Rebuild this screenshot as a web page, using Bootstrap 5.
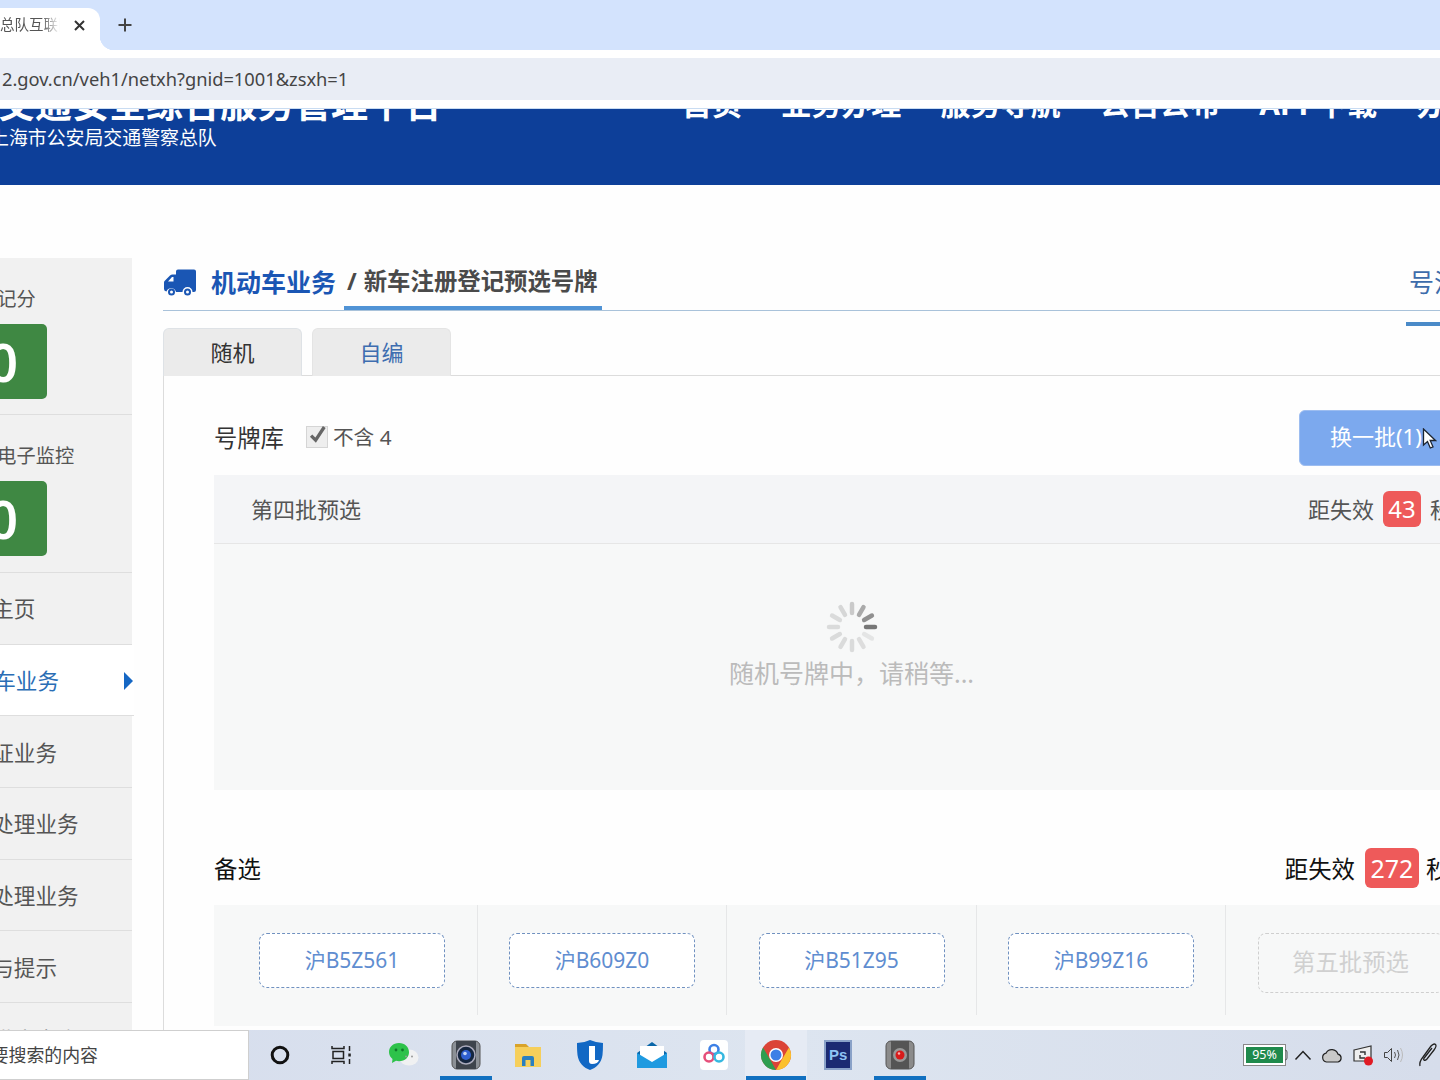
<!DOCTYPE html>
<html lang="zh-CN">
<head>
  <meta charset="UTF-8">
  <title>新车注册登记预选号牌</title>
  <link href="https://cdn.jsdelivr.net/npm/bootstrap@5.3.0/dist/css/bootstrap.min.css" rel="stylesheet">
  <style>
    html, body { height: 100%; }
    body {
      width: 1440px;
      height: 1080px;
      overflow: hidden;
      background: #fefefe;
      font-family: "Noto Sans", "Noto Sans CJK SC", sans-serif;
      color: #333;
    }

    /* browser chrome */
    .tab-strip { height: 50px; background: #d3e3fd; padding-top: 8px; flex: none; }
    .page-tab {
      position: relative;
      width: 100px;
      background: #fff;
      border-radius: 0 12px 0 0;
      font-size: 14.5px;
      color: #555;
      padding-bottom: 8px;
    }
    .page-tab::after {
      content: "";
      position: absolute;
      left: 100px;
      bottom: 0;
      width: 14px;
      height: 14px;
      background: radial-gradient(circle at 100% 0, #d3e3fd 14px, #fff 14.5px);
    }
    .tab-title {
      width: 60px;
      overflow: hidden;
      white-space: nowrap;
      -webkit-mask-image: linear-gradient(90deg, #000 70%, transparent);
      mask-image: linear-gradient(90deg, #000 70%, transparent);
    }
    .tab-x { margin-left: 13px; }
    .tab-add { margin: 0 0 8px 17px; }
    .url-wrap { height: 58px; padding: 8px 0; background: #fff; flex: none; }
    .url-bar {
      height: 42px;
      background: #e9edf5;
      padding-left: 2px;
      font-size: 18.3px;
      color: #444;
      white-space: nowrap;
    }

    /* site header, scrolled so only its lower part is seen */
    .brand-bar {
      height: 77px;
      background: #0d3f99;
      color: #fff;
      overflow: hidden;
      flex: none;
      border-top: 1px solid #c9dcf2;
    }
    .brand-left { margin-left: -2px; width: 684px; flex: none; }
    .brand-name {
      font-size: 37px;
      font-weight: 700;
      line-height: 44px;
      margin-top: -27px;
      white-space: nowrap;
    }
    .brand-sub {
      font-size: 18.9px;
      line-height: 24px;
      margin: 0 0 0 -8px;
      white-space: nowrap;
    }
    .brand-links {
      font-size: 30px;
      font-weight: 700;
      line-height: 40px;
      margin-top: -25px;
      gap: 39.3px;
      white-space: nowrap;
    }

    .mid-area { height: 845px; flex: none; overflow: hidden; }

    /* left menu */
    .side-menu {
      width: 192px;
      margin: 73px 0 0 -60px;
      flex: none;
      background: #f1f1f1;
      font-size: 21.6px;
    }
    .side-menu .list-group-item {
      background: transparent;
      border-color: #dedede;
      color: #555;
      padding: 2px 0 0 9px;
      height: 71.7px;
      display: flex;
      align-items: center;
      white-space: nowrap;
    }
    .side-menu .list-group-item.now-item {
      background: #fff;
      color: #2a6db5;
      position: relative;
      padding-left: 11px;
      margin-right: -2px;
    }
    .now-arrow {
      position: absolute;
      right: 1px;
      top: 27px;
      width: 0;
      height: 0;
      border-left: 9px solid #1567c4;
      border-top: 9px solid transparent;
      border-bottom: 9px solid transparent;
    }
    .side-menu .score-item {
      height: 157px;
      display: block;
      padding: 29px 0 0 19px;
      font-size: 19.2px;
      line-height: 24px;
    }
    .side-menu .score-item + .score-item { height: 158px; }
    .score-num {
      width: 94px;
      height: 75px;
      margin: 13px 0 0 -6px;
      padding-left: 6px;
      background: #3f8843;
      border-radius: 5px;
      color: #fff;
      font-size: 52px;
      font-weight: 600;
    }

    /* main column */
    .main-col { width: 1277px; margin: 78px 0 0 31px; flex: none; overflow: hidden; position: relative; }
    .crumb-row {
      height: 48px;
      border-bottom: 1px solid #a9c2da;
      white-space: nowrap;
    }
    .crumb-truck { margin: 0 15px 7px 1px; }
    .crumb-root { font-size: 25px; font-weight: 700; color: #1a56b4; margin: 0 8px 8px 0; }
    .crumb-now {
      font-size: 23.4px;
      font-weight: 700;
      color: #4a4a4a;
      padding: 0 4px 0 3px;
      height: 47px;
      line-height: 36px;
      border-bottom: 4px solid #5093d5;
    }
    .crumb-now span { margin-right: 7px; }
    .crumb-right { position: absolute; left: 1246px; top: 1px; font-size: 25px; color: #3d6cab; line-height: 36px; white-space: nowrap; }
    .crumb-bar { position: absolute; left: 1243px; top: 59px; width: 60px; height: 4px; background: #4a8ac8; }

    .plate-tabs { margin-top: 17px; border-bottom: 1px solid #dcdcdc; gap: 10px; height: 48px; }
    .plate-tabs .nav-link {
      width: 139px;
      height: 48px;
      background: #ebebeb;
      border: 1px solid #e4e4e4;
      border-bottom: 0;
      border-radius: 6px 6px 0 0;
      font-size: 22px;
      line-height: 30px;
      padding: 8px 0 0;
      text-align: center;
      margin: 0;
      color: #3e6db0;
    }
    .plate-tabs .nav-link.active { color: #333; background: #ebebeb; }

    .plate-panel { border-left: 1px solid #dcdcdc; padding-left: 50px; width: 1340px; height: 700px; }
    .lib-row { height: 99px; padding-top: 24px; }
    .lib-title { font-size: 23.3px; line-height: 56px; color: #333; margin-right: 22px; }
    .fake-check {
      width: 22px;
      height: 22px;
      background: #eee;
      border: 1px solid #d5d5d5;
      margin: 0 5px 1px 0;
    }
    .no-four { font-size: 20.7px; color: #555; margin-top: 1px; }
    .swap-btn {
      position: absolute;
      left: 1136px;
      top: 147px;
      width: 200px;
      height: 56px;
      background: #7ca9ee;
      border: 1px solid #9dbdf0;
      border-radius: 6px;
      color: #fff;
      font-size: 22px;
      text-align: left;
      padding: 0 0 3px 30px;
    }
    .swap-btn:disabled { background: #7ca9ee; color: #fff; opacity: 1; border-color: #9dbdf0; }
    .mouse-arrow { position: absolute; left: 1259px; top: 165px; }

    .batch-head {
      height: 69px;
      background: #f4f5f7;
      border-bottom: 1px solid #e6e6e6;
      padding-left: 37px;
      font-size: 22px;
      color: #555;
    }
    .batch-time { margin-left: 947px; gap: 9px; white-space: nowrap; }
    .time-tag {
      background: #ee5a5a;
      color: #fff;
      border-radius: 6px;
      font-weight: 400;
      padding: 0;
      display: flex;
      align-items: center;
      justify-content: center;
    }
    .tag-sm { width: 38px; height: 36px; font-size: 24px; }
    .tag-lg { width: 54px; height: 40px; font-size: 25px; }
    .batch-body {
      height: 246px;
      background: #f7f8f8;
      padding-top: 56px;
      color: #bbb;
      font-size: 25px;
      width: 1275px;
    }
    .load-text { line-height: 36px; margin-top: 1px; width: 1275px; text-align: center; }

    .spare-row { height: 115px; padding-top: 41px; font-size: 23.4px; color: #111; white-space: nowrap; }
    .spare-label { margin-top: 3px; }
    .spare-time { margin-left: 1024px; gap: 10px; }
    .spare-time .secs { margin-left: -3px; }
    .spare-band { height: 121px; background: #f7f8f8; width: 1290px; }
    .spare-cell {
      height: 110px;
      width: 249.5px;
      padding: 28px 0 0 31.5px;
      border-right: 1px solid #e6e7e8;
      flex: none;
    }
    .spare-cell:first-child { width: 263.5px; padding-left: 45px; }
    .spare-cell:last-child { border-right: 0; }
    .plate-btn {
      width: 186px;
      height: 55px;
      background: #fff;
      border: 1px dashed #7091c0;
      border-radius: 8px;
      color: #5f8dd0;
      font-size: 21px;
    }
    .plate-btn.off-btn {
      height: 60px;
      background: transparent;
      border-color: #cfcfcf;
      color: #d0d0d0;
      font-size: 23.4px;
    }

    /* windows taskbar */
    .task-bar {
      height: 50px;
      flex: none;
      background: linear-gradient(90deg, #d5dcec, #dde5f0 55%, #d6ddeb);
    }
    .search-box {
      width: 249px;
      height: 50px;
      background: #fff;
      border: 1px solid #cfcfcf;
      border-left: 0;
      font-size: 17.9px;
      color: #444;
      white-space: nowrap;
      justify-content: flex-end;
      padding-right: 150px;
      flex: none;
    }
    .task-icon {
      position: relative;
      width: 62px;
      height: 50px;
      flex: none;
    }
    .task-icon.on-app::after {
      content: "";
      position: absolute;
      left: 5px;
      right: 5px;
      bottom: 0;
      height: 4px;
      background: #1170c0;
    }
    .task-icon.front-app { background: #e6ebf4; }
    .task-icon.front-app::after { left: 1px; right: 1px; }
    .tray-wrap { margin-left: 313px; gap: 9px; }
    .tray-battery { margin-right: -3px; }
    .tray-pen { margin-left: 4px; }
    .battery-box {
      width: 41px;
      height: 20px;
      background: #1f8a4c;
      border: 2px solid #fff;
      outline: 1px solid #888;
      color: #fff;
      font-size: 12.5px;
      line-height: 16px;
      text-align: center;
    }
    .ps-glyph { font-family: "Liberation Sans", sans-serif; font-weight: 700; font-size: 15px; fill: #8fc4f5; }
  </style>
</head>
<body class="d-flex flex-column">

  <div class="tab-strip d-flex">
    <div class="page-tab d-flex align-items-center">
      <span class="tab-title">总队互联网交通安全</span>
      <svg class="tab-x" width="13" height="13" viewBox="0 0 13 13"><path d="M2 2l9 9M11 2l-9 9" stroke="#333" stroke-width="2"/></svg>
    </div>
    <svg class="tab-add align-self-center" width="16" height="16" viewBox="0 0 16 16"><path d="M8 1.500v13M1.500 8h13" stroke="#444" stroke-width="2"/></svg>
  </div>

  <div class="url-wrap">
    <div class="url-bar d-flex align-items-center">2.gov.cn/veh1/netxh?gnid=1001&amp;zsxh=1</div>
  </div>

  <header class="brand-bar d-flex">
    <div class="brand-left">
      <div class="brand-name">交通安全综合服务管理平台</div>
      <p class="brand-sub">上海市公安局交通警察总队</p>
    </div>
    <nav class="brand-links d-flex">
      <span>首页</span><span>业务办理</span><span>服务导航</span><span>公告公布</span><span>APP下载</span><span>办事指南</span>
    </nav>
  </header>

  <div class="mid-area d-flex">
    <aside class="side-menu">
      <div class="list-group list-group-flush">
        <div class="list-group-item score-item">累积记分
          <div class="score-num d-flex align-items-center justify-content-center">0</div>
        </div>
        <div class="list-group-item score-item">处理电子监控
          <div class="score-num d-flex align-items-center justify-content-center">0</div>
        </div>
        <a class="list-group-item" href="#">我的主页</a>
        <a class="list-group-item now-item" href="#">机动车业务<i class="now-arrow"></i></a>
        <a class="list-group-item" href="#">驾驶证业务</a>
        <a class="list-group-item" href="#">违法处理业务</a>
        <a class="list-group-item" href="#">事故处理业务</a>
        <a class="list-group-item" href="#">告知与提示</a>
        <a class="list-group-item" href="#">网办进度查询</a>
      </div>
    </aside>

    <main class="main-col">
      <div class="crumb-row d-flex align-items-center">
        <svg class="crumb-truck" width="32" height="28" viewBox="0 0 32 28">
          <path fill="#1a56b4" d="M12 2.500Q12 .5 14 .5h16q2 0 2 2V21q0 2-2 2h-1.500a5 5 0 0 0-10 0H12a5 5 0 0 0-9.500-.5Q0 22 0 20v-6.500q0-1 .8-1.800L6 6.500Q7 5.500 8.500 5.500H12zM9.500 8H8L4 12.500h5.500z"/>
          <circle cx="7.500" cy="23" r="3.500" fill="#1a56b4"/><circle cx="7.500" cy="23" r="1.500" fill="#fff"/>
          <circle cx="23.500" cy="23" r="3.500" fill="#1a56b4"/><circle cx="23.500" cy="23" r="1.500" fill="#fff"/>
        </svg>
        <span class="crumb-root">机动车业务</span>
        <span class="crumb-now"><span>/</span>新车注册登记预选号牌</span>
      </div>
      <span class="crumb-right">号注</span>
      <i class="crumb-bar"></i>

      <ul class="nav nav-tabs plate-tabs">
        <li class="nav-item"><a class="nav-link active" href="#">随机</a></li>
        <li class="nav-item"><a class="nav-link" href="#">自编</a></li>
      </ul>

      <div class="plate-panel">
        <div class="lib-row d-flex align-items-center">
          <span class="lib-title">号牌库</span>
          <span class="fake-check d-flex align-items-center justify-content-center">
            <svg width="22" height="22" viewBox="0 0 22 22"><path d="M4.500 9.500l5 5L19 0" fill="none" stroke="#666" stroke-width="3.600"/></svg>
          </span>
          <span class="no-four">不含 4</span>
        </div>

        <div class="batch-head d-flex align-items-center">
          <span>第四批预选</span>
          <div class="batch-time d-flex align-items-center">
            <span>距失效</span><span class="badge time-tag tag-sm">43</span><span>秒</span>
          </div>
        </div>
        <div class="batch-body">
          <div class="text-center">
            <svg width="54" height="54" viewBox="-27 -27 54 54">
              <g stroke="#777" stroke-width="4.500" stroke-linecap="round">
                <line x1="14" x2="23" opacity="1"/>
                <line x1="14" x2="23" opacity=".14" transform="rotate(30)"/>
                <line x1="14" x2="23" opacity=".2" transform="rotate(60)"/>
                <line x1="14" x2="23" opacity=".22" transform="rotate(90)"/>
                <line x1="14" x2="23" opacity=".22" transform="rotate(120)"/>
                <line x1="14" x2="23" opacity=".22" transform="rotate(150)"/>
                <line x1="14" x2="23" opacity=".22" transform="rotate(180)"/>
                <line x1="14" x2="23" opacity=".22" transform="rotate(210)"/>
                <line x1="14" x2="23" opacity=".25" transform="rotate(240)"/>
                <line x1="14" x2="23" opacity=".35" transform="rotate(270)"/>
                <line x1="14" x2="23" opacity=".6" transform="rotate(300)"/>
                <line x1="14" x2="23" opacity=".8" transform="rotate(330)"/>
              </g>
            </svg>
          </div>
          <div class="load-text">随机号牌中，请稍等...</div>
        </div>

        <div class="spare-row d-flex align-items-center">
          <span class="spare-label">备选</span>
          <div class="spare-time d-flex align-items-center">
            <span class="spare-label">距失效</span><span class="badge time-tag tag-lg">272</span><span class="secs spare-label">秒</span>
          </div>
        </div>
        <div class="spare-band d-flex">
          <div class="spare-cell"><div class="plate-btn d-flex align-items-center justify-content-center">沪B5Z561</div></div>
          <div class="spare-cell"><div class="plate-btn d-flex align-items-center justify-content-center">沪B609Z0</div></div>
          <div class="spare-cell"><div class="plate-btn d-flex align-items-center justify-content-center">沪B51Z95</div></div>
          <div class="spare-cell"><div class="plate-btn d-flex align-items-center justify-content-center">沪B99Z16</div></div>
          <div class="spare-cell"><div class="plate-btn off-btn d-flex align-items-center justify-content-center">第五批预选</div></div>
        </div>
      </div>

      <button class="btn swap-btn" disabled>换一批(1)</button>
      <svg class="mouse-arrow" width="15" height="22" viewBox="0 0 15 22"><path d="M1.500 1v16l4-3.500 2.800 6.500 2.700-1.200-2.800-6.300H13.500z" fill="#fff" stroke="#1c2430" stroke-width="1.300"/></svg>
    </main>
  </div>

  <footer class="task-bar d-flex align-items-center">
    <div class="search-box d-flex align-items-center">要搜索的内容</div>
    <div class="task-icon d-flex align-items-center justify-content-center">
      <svg width="22" height="22" viewBox="0 0 22 22"><circle cx="11" cy="11" r="7.800" fill="none" stroke="#111" stroke-width="3"/></svg>
    </div>
    <div class="task-icon d-flex align-items-center justify-content-center">
      <svg width="24" height="24" viewBox="0 0 24 24" fill="none" stroke="#222" stroke-width="1.500"><path d="M2 3v2.500h12V3M3 8.500h10.500v7H3zM2 21v-2.500h12V21M19.500 3v5M19.500 16v5"/><path d="M18.300 10.500h2.500v3h-2.500z" fill="#222" stroke="none"/></svg>
    </div>
    <div class="task-icon d-flex align-items-center justify-content-center">
      <svg width="32" height="26" viewBox="0 0 32 26"><ellipse cx="21" cy="15.500" rx="9.500" ry="8" fill="#f0f1f2"/><path d="M11 1C5 1 1 5 1 10c0 3 1.400 5.200 3.500 7L4 21l4-2.200c1 .3 2 .4 3 .4 6 0 10-4 10-9S17 1 11 1z" fill="#2dc24a"/><circle cx="8" cy="8" r="1.400" fill="#0e7a2a"/><circle cx="14.500" cy="8" r="1.400" fill="#0e7a2a"/><circle cx="18" cy="14.500" r="1" fill="#999"/><circle cx="24" cy="14.500" r="1" fill="#999"/></svg>
    </div>
    <div class="task-icon on-app d-flex align-items-center justify-content-center">
      <svg width="30" height="30" viewBox="0 0 30 30"><rect x="1" y="1" width="28" height="28" rx="5" fill="#8b9096" stroke="#555"/><rect x="5" y="1" width="20" height="28" fill="#3e444c"/><circle cx="15" cy="15" r="9" fill="#15263f" stroke="#aab" stroke-width="1.500"/><circle cx="15" cy="15" r="5" fill="#2f5fd0"/><circle cx="14" cy="13.500" r="1.800" fill="#c6d8f5"/></svg>
    </div>
    <div class="task-icon d-flex align-items-center justify-content-center">
      <svg width="28" height="26" viewBox="0 0 28 26"><path d="M1 2h11l3 3H1z" fill="#d9a32a"/><path d="M1 5h26v20H1z" fill="#f6cf5b"/><path d="M8 24v-8q0-2 2-2h8q2 0 2 2v8h-3.500v-6h-5v6z" fill="#2a7fc0"/></svg>
    </div>
    <div class="task-icon d-flex align-items-center justify-content-center">
      <svg width="28" height="32" viewBox="0 0 28 32"><path d="M14 1q7 3 13 3 0 7-.5 12C25.500 24 20 29 14 31 8 29 2.500 24 1.500 16 1 11 1 8 1 4q7 0 13-3z" fill="#1268c4"/><path d="M13 7h6v14h4q-1 4-7 4-3 0-3-3z" fill="#fff"/></svg>
    </div>
    <div class="task-icon d-flex align-items-center justify-content-center">
      <svg width="32" height="28" viewBox="0 0 32 28"><path d="M16 1L1 12v15h30V12z" fill="#0a66a8"/><path d="M4 5h24v13L16 24 4 18z" fill="#fff"/><path d="M1 12l15 9 15-9v15H1z" fill="#1f9ae0"/></svg>
    </div>
    <div class="task-icon d-flex align-items-center justify-content-center">
      <svg width="30" height="32" viewBox="0 0 30 32"><rect x="1" y="1" width="28" height="30" rx="4" fill="#fff"/><g fill="none" stroke-width="2.600"><circle cx="15" cy="10.500" r="4.500" stroke="#3d80e6"/><circle cx="10" cy="18" r="4.500" stroke="#e64f7a"/><circle cx="20" cy="18" r="4.500" stroke="#35b8e0"/></g></svg>
    </div>
    <div class="task-icon front-app on-app d-flex align-items-center justify-content-center">
      <svg width="32" height="32" viewBox="0 0 32 32"><circle cx="16" cy="16" r="15" fill="#db4437"/><path d="M29 8.500A15 15 0 0 1 16 31l6.500-11.500z" fill="#fbc02d"/><path d="M3 8.500L9.500 19.500 16 31A15 15 0 0 1 3 8.500z" fill="#2e9e4f"/><circle cx="16" cy="16" r="7" fill="#fff"/><circle cx="16" cy="16" r="5.500" fill="#3d7fe6"/></svg>
    </div>
    <div class="task-icon d-flex align-items-center justify-content-center">
      <svg width="28" height="30" viewBox="0 0 28 30"><rect x="1" y="1" width="26" height="28" fill="#1b2a72" stroke="#8aa2c8" stroke-width="2"/><text class="ps-glyph" x="5" y="20">Ps</text></svg>
    </div>
    <div class="task-icon on-app d-flex align-items-center justify-content-center">
      <svg width="30" height="30" viewBox="0 0 30 30"><rect x="1" y="1" width="28" height="28" rx="5" fill="#8b8b8b" stroke="#555"/><rect x="6" y="1" width="18" height="28" fill="#555"/><circle cx="15" cy="15" r="7" fill="#999"/><circle cx="15" cy="15" r="4.500" fill="#d81b1b"/><circle cx="14" cy="13.500" r="1.200" fill="#ffb0b0"/></svg>
    </div>
    <div class="tray-wrap d-flex align-items-center">
      <div class="tray-battery d-flex align-items-center">
        <div class="battery-box">95%</div>
        <svg width="3" height="12" viewBox="0 0 3 12"><path d="M0 1q2 0 2 2v6q0 2-2 2" fill="none" stroke="#555"/></svg>
      </div>
      <svg width="18" height="12" viewBox="0 0 18 12"><path d="M1.500 10.500L9 2.500l7.500 8" fill="none" stroke="#222" stroke-width="1.500"/></svg>
      <svg width="22" height="15" viewBox="0 0 22 15"><path d="M5.500 14a4.500 4.500 0 0 1-.5-8.800 6.500 6.500 0 0 1 12 1A4 4 0 0 1 17 14z" fill="#c9c9c9" stroke="#222" stroke-width="1.200"/></svg>
      <svg width="22" height="22" viewBox="0 0 22 22"><path d="M2 6l17-4v15H2z" fill="#eee" stroke="#333" stroke-width="1.200"/><path d="M8 8h5v3M13 14H8v-3" fill="none" stroke="#333" stroke-width="1.400"/><circle cx="16.500" cy="17" r="4.500" fill="#e01b24"/></svg>
      <svg width="22" height="18" viewBox="0 0 22 18"><path d="M1.500 6.500h3l4-4v13l-4-4h-3z" fill="none" stroke="#444"/><path d="M11.500 6q2 3 0 6M14.500 4q3 5 0 10" fill="none" stroke="#555"/><path d="M17.500 2q4 7 0 14" fill="none" stroke="#bbb"/></svg>
      <svg class="tray-pen" width="22" height="26" viewBox="0 0 22 26"><path d="M2 24q-1-4 3-9l8-11q3-3 4.500-1.500T16 8l-7 9q-2 2-3 1t1-3l7-9" fill="none" stroke="#222" stroke-width="1.300"/></svg>
    </div>
  </footer>

  <script src="https://cdn.jsdelivr.net/npm/bootstrap@5.3.0/dist/js/bootstrap.bundle.min.js"></script>
</body>
</html>
